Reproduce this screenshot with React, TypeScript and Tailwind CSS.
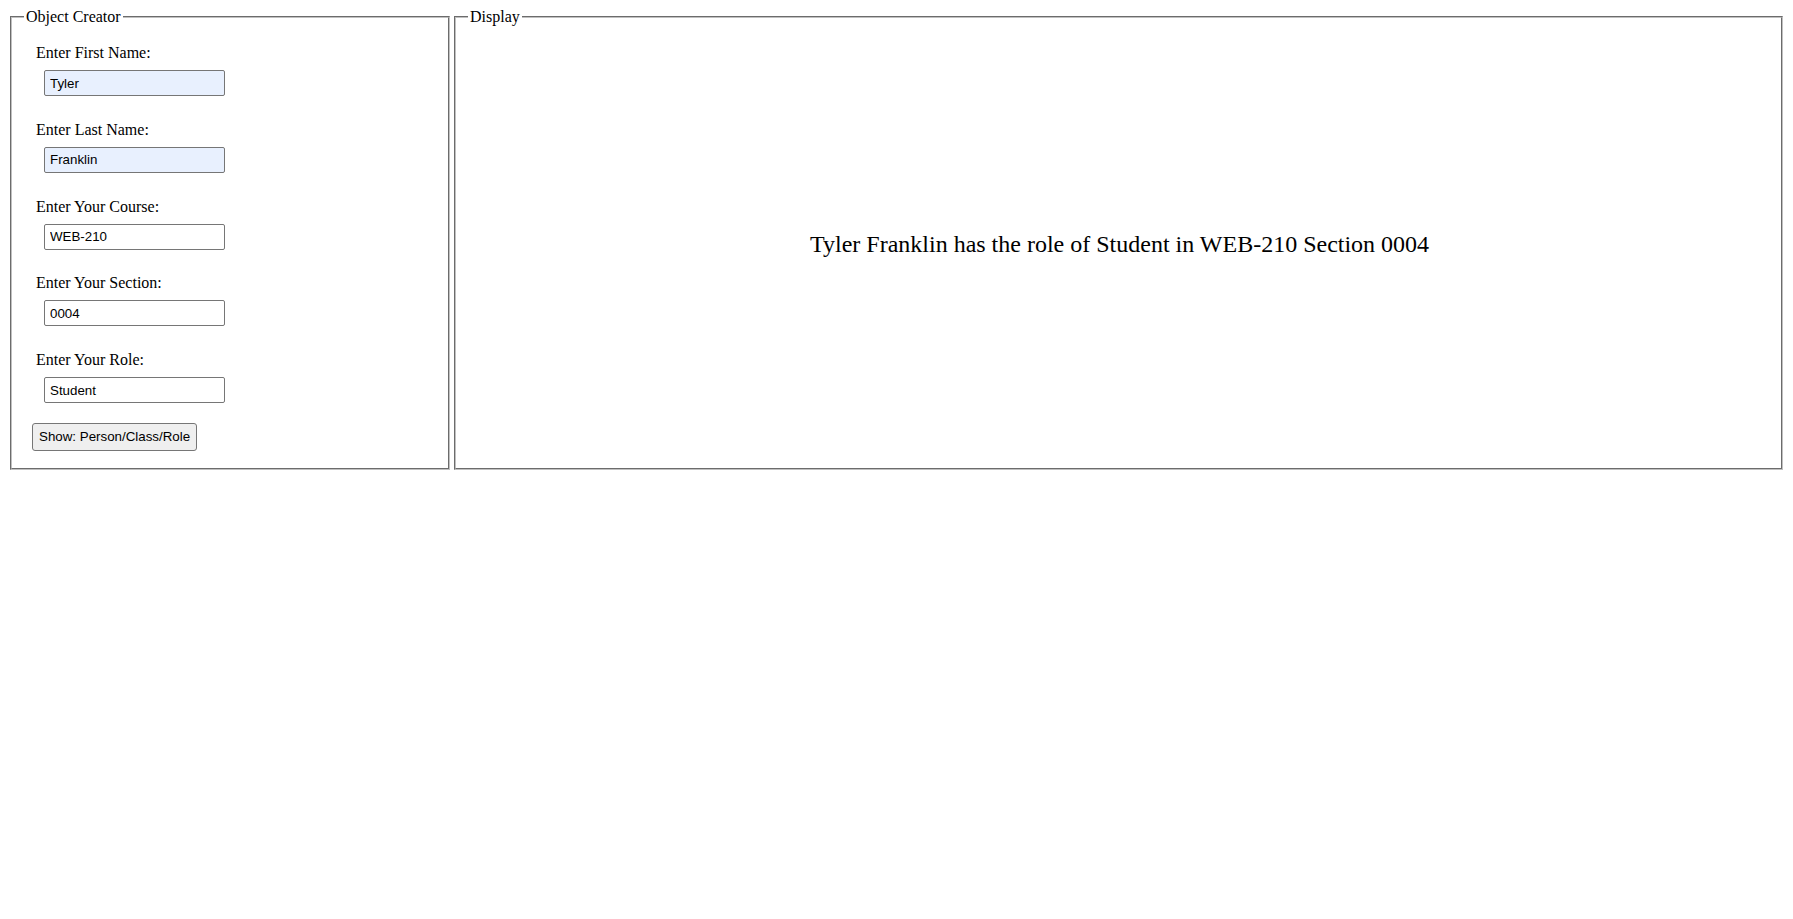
const fields = [
  { label: 'Enter First Name:', value: 'Tyler', autofilled: true },
  { label: 'Enter Last Name:', value: 'Franklin', autofilled: true },
  { label: 'Enter Your Course:', value: 'WEB-210', autofilled: false },
  { label: 'Enter Your Section:', value: '0004', autofilled: false },
  { label: 'Enter Your Role:', value: 'Student', autofilled: false },
];

export default function App() {
  return (
    <div className="min-h-screen bg-white p-2 font-['Liberation_Serif',serif] text-[16px] text-black">
      <div className="flex items-stretch">
        <fieldset className="mx-[2px] w-[440px] shrink-0 border-2 border-[#c0c0c0] [border-style:groove] px-3 pb-[17px]">
          <legend className="px-[2px] leading-[18px]">Object Creator</legend>
          <div className="flex flex-col gap-[24.75px] pt-[18px]">
            {fields.map((f) => (
              <div key={f.label} className="flex flex-col">
                <label className="ml-3 leading-[18px]">{f.label}</label>
                <input
                  type="text"
                  defaultValue={f.value}
                  className={`ml-5 mt-2 h-[26px] w-[181px] rounded-[2px] border border-[#767676] px-[5px] font-['Liberation_Sans',Arial,sans-serif] text-[13.33px] text-black outline-none ${
                    f.autofilled ? 'bg-[#e8f0fe]' : 'bg-white'
                  }`}
                />
              </div>
            ))}
          </div>
          <button
            type="button"
            className="ml-2 mt-[20px] h-[28px] rounded-[3px] border border-[#767676] bg-[#efefef] px-[6px] font-['Liberation_Sans',Arial,sans-serif] text-[13.33px] text-black"
          >
            Show: Person/Class/Role
          </button>
        </fieldset>

        <fieldset className="mx-[2px] flex-1 border-2 border-[#c0c0c0] [border-style:groove] px-3">
          <legend className="px-[2px] leading-[18px]">Display</legend>
          <p className="pl-[342px] pt-[200px] text-[24px]">
            Tyler Franklin has the role of Student in WEB-210 Section 0004
          </p>
        </fieldset>
      </div>
    </div>
  );
}
